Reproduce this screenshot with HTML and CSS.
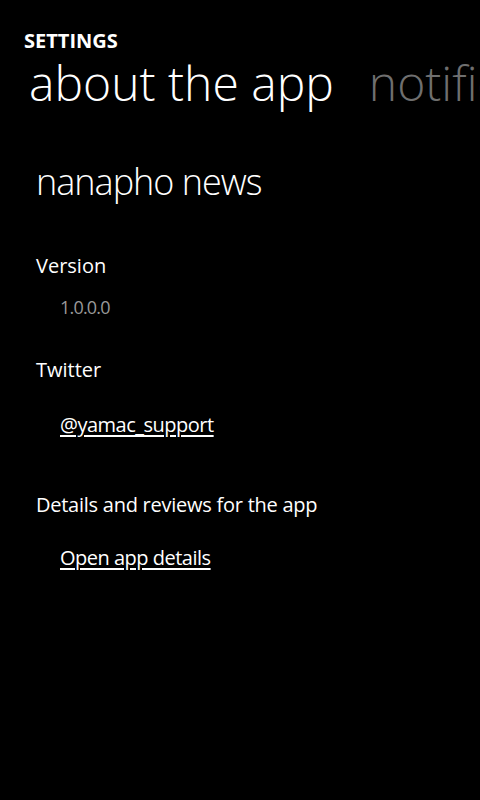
FILE: index.html
```html
<!DOCTYPE html>
<html>
<head>
<meta charset="utf-8">
<link rel="stylesheet" href="styles.css">
</head>
<body>
<div class="page">
  <div class="app-title">SETTINGS</div>
  <div class="pivot">
    <span class="pivot-item active">about the app</span>
    <span class="pivot-item">notifications</span>
  </div>
  <div class="content">
    <div class="app-name">nanapho news</div>
    <div class="section first">
      <div class="label">Version</div>
      <div class="value muted">1.0.0.0</div>
    </div>
    <div class="section">
      <div class="label">Twitter</div>
      <a class="value link twitter">@yamac_support</a>
    </div>
    <div class="section">
      <div class="label long">Details and reviews for the app</div>
      <a class="value link details">Open app details</a>
    </div>
  </div>
</div>
</body>
</html>
```
FILE: styles.css
```css
html, body {
  margin: 0;
  padding: 0;
  background: #000;
  height: 100%;
}
body {
  font-family: "Open Sans", "Noto Sans", sans-serif;
  color: #fff;
  overflow: hidden;
}
.page {
  padding-top: 31px;
}
.app-title {
  font-size: 20px;
  font-weight: 700;
  line-height: 1;
  padding-left: 24px;
}
.pivot {
  margin-top: 1px;
  display: flex;
  gap: 35px;
  white-space: nowrap;
  padding-left: 29px;
  font-size: 48px;
  font-weight: 300;
  line-height: 62px;
}
.pivot-item {
  color: #6f6f6f;
}
.pivot-item.active {
  color: #fff;
}
.content {
  padding-left: 36px;
  display: flex;
  flex-direction: column;
  align-items: flex-start;
}
.app-name {
  margin-top: 50px;
  font-size: 36px;
  font-weight: 300;
  line-height: 1;
  letter-spacing: -1px;
}
.section {
  display: flex;
  flex-direction: column;
  align-items: flex-start;
  margin-top: 44px;
}
.section.first {
  margin-top: 56px;
}
.label {
  font-size: 20px;
  line-height: 1;
}
.label.long {
  letter-spacing: -0.25px;
}
.value {
  margin-left: 24px;
  font-size: 20px;
  line-height: 1;
  letter-spacing: -0.5px;
}
.muted {
  margin-top: 22px;
  font-size: 18px;
  color: #999;
  letter-spacing: -0.8px;
}
.link {
  color: #fff;
  text-decoration: underline;
  text-underline-offset: 3px;
}
.twitter {
  margin-top: 35px;
}
.section + .section + .section {
  margin-top: 60px;
}
.details {
  margin-top: 33px;
}
```
